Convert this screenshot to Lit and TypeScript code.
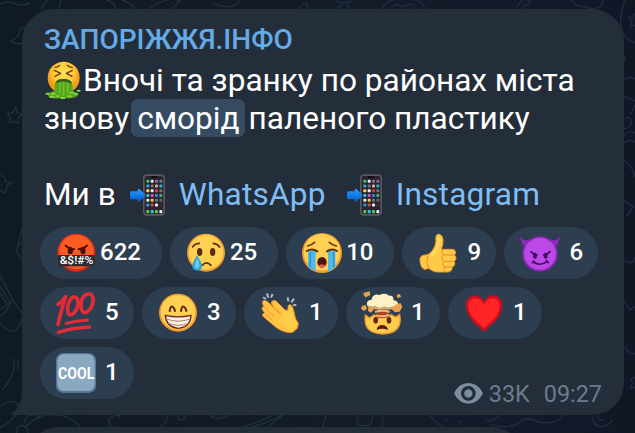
import { LitElement, html, svg, css, SVGTemplateResult } from "lit";
import { customElement, property } from "lit/decorators.js";

const EMOJI: Record<string, SVGTemplateResult> = {
  swearing: svg`
    <circle cx="61" cy="59" r="57" fill="#d92c14"/><circle cx="61" cy="57" r="52" fill="#fb5b22"/>
    <ellipse cx="43" cy="53" rx="8" ry="11" fill="#4a0f0c"/><ellipse cx="81" cy="53" rx="8" ry="11" fill="#4a0f0c"/>
    <path d="M29 38Q40 48 54 49M93 38Q82 48 68 49" stroke="#4a0f0c" stroke-width="6" fill="none" stroke-linecap="round"/>
    <rect x="6" y="66" width="110" height="34" rx="4" fill="#2b2b30"/>
    <text x="11" y="94" font-size="31" textLength="101" lengthAdjust="spacingAndGlyphs" font-weight="500" fill="#fff">&amp;$!#%</text>`,
  cry: svg`
    <circle cx="60" cy="59" r="57" fill="#f29a2e"/><circle cx="60" cy="58" r="52" fill="#ffd052"/>
    <ellipse cx="41" cy="57" rx="8" ry="12" fill="#5b2b12"/><ellipse cx="80" cy="57" rx="8" ry="12" fill="#5b2b12"/>
    <path d="M20 42Q25 32 40 31M101 42Q95 32 82 31M49 97Q61 82 75 97" stroke="#5b2b12" stroke-width="5" fill="none" stroke-linecap="round"/>
    <path d="M33 66C25 82 19 90 19 99C19 117 48 117 48 99C48 90 41 82 33 66Z" fill="#2ba4dd"/>
    <path d="M34 76Q25 93 27 101Q32 112 40 101Q42 91 34 76Z" fill="#72caef"/>`,
  sob: svg`
    <circle cx="60" cy="60" r="60" fill="#f29a2e"/><circle cx="60" cy="58" r="55" fill="#ffd052"/>
    <path d="M20 54H41V116Q28 111 18 100V54ZM78 54H100V101Q91 111 78 116Z" fill="#50b9e8"/>
    <path d="M25 57V105M95 57V104" stroke="#2695cf" stroke-width="4"/>
    <path d="M14 54Q31 44 46 55M75 55Q90 44 105 54" stroke="#5b2b12" stroke-width="6" fill="none" stroke-linecap="round"/>
    <path d="M17 39Q28 36 38 28M82 28Q91 36 103 39" stroke="#6b3414" stroke-width="5" fill="none" stroke-linecap="round"/>
    <ellipse cx="60" cy="88" rx="14" ry="16" fill="#4b160f"/><ellipse cx="60" cy="99" rx="9" ry="5" fill="#dc6254"/>`,
  thumb: svg`
    <path d="M57 5C65 0 74 8 75 20C76 31 72 42 70 49H102C113 49 116 60 109 66C116 72 115 82 108 85C113 92 109 100 102 102C104 112 96 117 88 117H58C45 117 38 109 30 105C25 112 14 110 10 99C5 87 4 74 11 69C19 64 28 68 34 62C44 54 51 41 53 30C55 20 51 10 57 5Z" fill="#ffca45" stroke="#f1982c" stroke-width="3"/>
    <path d="M107 66H77Q66 58 77 50M106 85H78Q66 76 77 66M101 102H80Q68 94 78 85M80 102Q73 110 81 116M29 70Q22 88 31 104" fill="none" stroke="#e98b26" stroke-width="3" stroke-linecap="round"/>
    <path d="M61 13Q67 20 60 38Q53 56 42 67" fill="none" stroke="#ffdc63" stroke-width="7" stroke-linecap="round"/>`,
  devil: svg`
    <path d="M1 5Q4 24 22 22L35 18L16 43Q2 33 1 5ZM119 5Q116 24 98 22L85 18L104 43Q118 33 119 5Z" fill="#8e2cc1"/>
    <circle cx="60" cy="63" r="53" fill="#8927b4"/><circle cx="60" cy="62" r="48" fill="#bd48e8"/>
    <ellipse cx="45" cy="68" rx="6" ry="9" fill="#410d62"/><ellipse cx="77" cy="68" rx="6" ry="9" fill="#410d62"/>
    <path d="M33 56Q40 65 51 66M90 56Q82 65 71 66M40 87Q60 101 81 86M37 89L42 84M79 83L85 89" stroke="#410d62" stroke-width="5" fill="none" stroke-linecap="round"/>`,
  hundred: svg`
    <g fill="none" stroke="#e52b35" stroke-linecap="round" stroke-linejoin="round">
    <path d="M6 34Q20 26 29 11Q13 61 6 94" stroke-width="11"/>
    <path d="M60 13C43 5 31 39 36 58C41 77 64 57 66 31Q67 17 60 13Z" stroke-width="11"/>
    <path d="M97 3C79 4 70 32 77 50C84 71 108 50 111 26Q113 1 97 3Z" stroke-width="11"/>
    <path d="M30 91Q61 83 94 81" stroke-width="9"/><path d="M7 118Q45 105 101 102" stroke-width="10"/></g>`,
  grin: svg`
    <circle cx="60" cy="59" r="57" fill="#f29a2e"/><circle cx="60" cy="58" r="52" fill="#ffd052"/>
    <path d="M35 54Q37 39 43 41Q49 43 51 54M69 54Q71 39 77 41Q83 43 85 54" fill="none" stroke="#592b12" stroke-width="6" stroke-linecap="round"/>
    <path d="M22 67Q60 76 99 67Q97 104 60 106Q25 102 22 67Z" fill="#fff0e7" stroke="#692b19" stroke-width="4"/>
    <path d="M25 78Q60 91 96 78M31 91Q60 103 91 91" fill="none" stroke="#aa8270" stroke-width="3"/>`,
  clap: svg`
    <path d="M8 26C12 19 21 24 28 31L42 43L34 30C35 21 45 20 51 27L71 47C79 54 85 54 84 44C83 34 92 32 96 40C104 54 103 70 108 80L115 91L112 106L98 118C80 121 60 112 47 102L10 71Q4 62 14 59L7 50Q3 42 13 41L8 33Z" fill="#ffc444" stroke="#ee942c" stroke-width="3"/>
    <path d="M12 40L43 71M12 58L39 83M24 28L58 63M43 43L67 68" fill="none" stroke="#ed992e" stroke-width="3"/>
    <path d="M70 52C80 61 88 56 90 44Q98 46 99 66L110 92L94 113Q74 103 60 84Z" fill="#ffce49"/>
    <path d="M9 13L18 18M21 1L25 14M38 3L33 14M83 13L85 25M102 17L94 28M109 36L99 37" stroke="#aeb8bf" stroke-width="6"/>`,
  exploding: svg`
    <path d="M10 66L23 75L37 65L48 76L61 67L75 76L88 65L101 73L113 64Q124 121 61 123Q2 121 10 66Z" fill="#ffcc4d" stroke="#ef9b31" stroke-width="4"/>
    <path d="M44 43L78 44L77 60Q88 72 60 76Q32 73 47 59Z" fill="#a94720"/>
    <path d="M39 57Q60 49 83 57M42 67Q63 74 82 65" stroke="#f0b580" stroke-width="6" fill="none"/>
    <path d="M16 38C11 28 20 19 29 20C30 5 45 2 52 6C65-1 77 2 80 8C94 6 95 17 94 22C108 22 112 34 104 41Q62 55 16 38Z" fill="#fff0c6"/>
    <path d="M15 36Q29 43 40 38Q53 49 66 40Q87 48 105 34L101 46Q83 53 67 49Q43 52 20 46Z" fill="#c8aa78"/>
    <path d="M6-1L23-5L25 6L11 13L4 5ZM104 5L114 3L117 12L106 15ZM0 39L11 36L15 47L6 54L-3 47ZM19 45L31 42L35 51L26 59L18 54ZM101 36L115 30L121 41L113 56L99 58L88 48Z" fill="#f0a04b"/>
    <ellipse cx="41" cy="82" rx="7" ry="10" fill="#5b2b12"/><ellipse cx="81" cy="82" rx="7" ry="10" fill="#5b2b12"/>
    <path d="M44 111Q46 96 61 96Q76 97 78 111Q60 103 44 111Z" fill="#5b1812"/>`,
  heart: svg`
    <path d="M60 117C44 99 6 76 5 38C4 2 47-4 60 25C73-4 116 2 115 38C114 76 76 99 60 117Z" fill="#c70f20"/>
    <path d="M60 105C46 91 13 70 13 38C13 10 48 7 60 36C72 7 107 10 107 38C107 70 74 91 60 105Z" fill="#ff2526"/>`,
  cool: svg`
    <rect x="0" y="0" width="120" height="120" rx="22" fill="#54779a"/><rect x="4" y="4" width="112" height="110" rx="19" fill="#8ba8c1"/>
    <text x="6" y="78" font-size="50" font-weight="700" textLength="109" lengthAdjust="spacingAndGlyphs" fill="#fff">COOL</text>`,
};

const APP_ROWS = [
  ["#3bd05a", "#e9e9ee", "#9c63b5", "#777b80"],
  ["#29aad8", "#77717c", "#e5b18d", "#28b0d2"],
  ["#f3dc4f", "#eeeeee", "#d93c49", "#737177"],
  ["#2cc4e4", "#ec45bd", "#2787e2", "#35ba62"],
  ["#ece9e5", "#edce48", "#77717c", "#68656e"],
  ["#289ee1", "#d54a43", "#f1f1f1", "#332e38"],
];
const DOCK = ["#42d257", "#35c9df", "#42d257", "#e9e9ee"];

const phone = () => html`<svg class="phone" viewBox="297 36 111 132">
  <defs><linearGradient id="arrow" x2="0" y2="1"><stop stop-color="#24a0ff"/><stop offset="1" stop-color="#0759c7"/></linearGradient></defs>
  <rect x="339" y="40" width="66" height="124" rx="12" fill="#5c555f"/>
  <rect x="344" y="45" width="56" height="114" rx="7" fill="#2b2530"/>
  <rect x="363" y="45" width="18" height="6" rx="3" fill="#09080c"/>
  ${APP_ROWS.map((row, r) => row.map((c, i) => svg`<rect x=${349 + i * 13} y=${56 + r * 14.3} width="9" height="9" rx="3" fill=${c}/>`))}
  ${DOCK.map((c, i) => svg`<rect x=${349 + i * 13} y="147" width="9" height="10" rx="3" fill=${c}/>`)}
  <path d="M300 95Q300 91 305 91H323V86Q324 81 329 85L345 100Q347 103 345 106L329 121Q324 124 323 119V115H305Q300 115 300 111Z" fill="url(#arrow)"/>
</svg>`;

const sick = html`<svg class="sick" viewBox="135 180 108 120">
  <defs><radialGradient id="face" cy=".35"><stop stop-color="#ffe45a"/><stop offset=".65" stop-color="#ffc936"/><stop offset="1" stop-color="#f59b18"/></radialGradient></defs>
  <circle cx="191" cy="233" r="48" fill="url(#face)"/>
  <path d="M163 211L182 220L165 229M217 211L199 220L216 229M165 202Q174 202 179 196M202 196Q208 202 217 203" fill="none" stroke="#693b17" stroke-width="4" stroke-linecap="round" stroke-linejoin="round"/>
  <path d="M165 252Q168 237 190 237Q213 237 217 252L219 274Q236 278 233 287Q218 298 190 294Q155 299 144 287Q145 277 164 273Z" fill="#55a51f"/>
  <path d="M166 250Q171 235 191 237Q212 237 216 251Q190 239 166 250Z" fill="#365b10"/>
  <path d="M180 248V280M191 246V288M203 249V280" stroke="#72c32c" stroke-width="4"/>
  <path d="M139 281H147M151 291H160M169 289H176M184 294H193M205 289H213M224 282H232M233 272H239M155 281H164M211 278H219" stroke="#7ed33a" stroke-width="6" stroke-linecap="round"/>
</svg>`;

@customElement("reaction-pill")
class ReactionPill extends LitElement {
  @property() emoji = "";
  @property() count = "";
  static styles = css`
    :host { display: block; }
    .pill { display: flex; align-items: center; box-sizing: border-box; height: 52px; padding: 0 21px 0 16px; border-radius: 26px; background: #2d3e51; }
    .icon { width: 40px; height: 40px; margin-right: 4px; overflow: visible; flex: none; font-family: Roboto, sans-serif; }
    .count { font: 500 24px/48px Roboto, sans-serif; color: #fff; height: 50px; }
    .single { width: 94px; padding-right: 0; }
    .single .icon { margin-right: 9px; }
  `;
  render() {
    return html`<div class="pill ${this.count.length === 1 ? "single" : ""}">
      <svg class="icon" viewBox="0 0 120 120">${EMOJI[this.emoji]}</svg><span class="count">${this.count}</span>
    </div>`;
  }
}

const ROWS = [
  [["swearing", "622"], ["cry", "25"], ["sob", "10"], ["thumb", "9"], ["devil", "6"]],
  [["hundred", "5"], ["grin", "3"], ["clap", "1"], ["exploding", "1"], ["heart", "1"]],
  [["cool", "1"]],
];

@customElement("app-root")
class AppRoot extends LitElement {
  static styles = css`
    :host { display: block; position: relative; height: 433px; overflow: hidden; font-family: Roboto, sans-serif;
      background: linear-gradient(90deg, #101a23, #131b29 60%, #121726); }
    .wallpaper { position: absolute; inset: 0; width: 635px; height: 433px; }
    .feed { position: relative; display: flex; flex-direction: column; gap: 12px; padding-top: 9px; }
    .bubble { position: relative; box-sizing: border-box; width: 602px; height: 406px; margin-left: 22px; padding: 12px 22px 15px;
      border-radius: 32px 32px 32px 0; background: #232e3a; }
    .tail { position: absolute; left: -11px; bottom: 0; width: 11px; height: 24px; }
    .next { width: 494px; height: 60px; margin-left: 28px; border-radius: 32px; background: #232e3a; }
    .title { height: 41px; font-size: 28px; line-height: 38px; font-weight: 500; color: #64aae6; white-space: nowrap; }
    .line { display: flex; align-items: center; height: 38px; font-size: 31.6px; line-height: 38px; color: #fff; white-space: nowrap; }
    .sick { width: 36px; height: 40px; margin: -2px 2px 0 1px; flex: none; }
    .phone { width: 37px; height: 44px; margin-top: -1px; flex: none; }
    .mark { height: 38px; margin: -2px 4px 0 2px; padding: 0 5px 0 6px; border-radius: 7px; background: #344b62; }
    .mark span { display: inline-block; margin-top: 1px; }
    .link { color: #7fbdf5; letter-spacing: 0.2px; }
    .gap-a { margin-left: 13px; }
    .gap-b { margin-left: 20px; }
    .reactions { display: flex; flex-direction: column; gap: 8px; margin: 13px 0 0 -4px; }
    .row { display: flex; gap: 8px; height: 52px; }
    .meta { display: flex; align-items: center; height: 28px; margin: 33px 0 0 auto; color: #6c7c8c; font-size: 23.4px; line-height: 28px; }
    .eye { width: 29px; height: 21px; margin: -2px 6px 0 0; }
    .time { margin-left: 14px; }
  `;
  render() {
    return html`
      <svg class="wallpaper" viewBox="0 0 1905 1299" fill="none" stroke="#20303c" stroke-width="4">
        <path d="M0 12Q20 2 44 10Q70 22 90 8M125 28Q130 5 145 0M180 25Q175 0 200 -8M320 0Q348 10 346 27M365 0Q398 10 405 27M450 24Q500 -12 540 2L515 26M640 10Q700 35 720 0M900 26Q905 5 922 12V27"/>
        <path d="M32 124Q56 114 59 96Q61 79 78 82M32 124Q45 134 75 130"/>
        <path d="M47 320L51 337L67 344L54 353L55 370L42 363L28 369L31 352L22 341L38 338Z"/>
        <path d="M0 520Q14 528 17 544L34 550L20 556Q22 571 12 580L0 568M68 680L49 754L66 778M53 741L68 727M0 827L38 899L66 942M0 858L30 907M0 878L22 913M38 899Q25 915 0 927M34 905Q20 938 0 948M66 957Q54 996 34 994Q15 990 0 968"/>
        <path d="M40 1075Q52 1120 7 1170M54 1080V1112M0 1220Q20 1201 45 1206Q66 1220 48 1244Q28 1272 0 1282M50 1299Q48 1280 66 1276Q82 1276 84 1299M78 1270Q68 1252 88 1246Q112 1236 118 1256M75 1282Q115 1240 160 1244Q215 1246 242 1284"/>
        <path d="M360 1246Q326 1246 326 1264Q328 1284 344 1280M358 1246V1256M505 1244Q500 1270 480 1283M628 1246Q654 1264 682 1246M728 1281Q790 1262 824 1242M756 1281Q800 1270 850 1244M802 1281L850 1244M978 1246L968 1281M1075 1246Q1060 1278 1100 1277Q1120 1270 1116 1246M1144 1246Q1154 1264 1144 1281M1288 1246Q1310 1270 1330 1281M1336 1252L1342 1262M1374 1260L1386 1270M1458 1262Q1480 1266 1496 1247M1470 1274Q1540 1292 1570 1258Q1590 1252 1615 1266Q1664 1278 1692 1244M1777 1250Q1780 1282 1810 1279Q1830 1275 1836 1260M1790 1246Q1796 1265 1814 1258"/>
        <circle cx="543" cy="1250" r="10"/>
        <path d="M1005 2L1030 10L1060 2M1010 26L1025 12M1050 26L1040 10M1148 27Q1155 0 1200 -4Q1265 -8 1275 27M1175 25Q1180 10 1195 15Q1210 25 1225 13Q1245 12 1242 27M1550 22L1564 2Q1570 -10 1588 2Q1592 18 1575 16L1565 27M1715 0Q1730 24 1760 20Q1780 34 1805 15L1810 0" stroke="#202e40"/>
        <path d="M1875 0Q1855 50 1865 90Q1875 122 1905 127M1905 40L1898 50L1884 52L1895 63L1892 82L1905 75M1870 165Q1880 175 1870 187M1870 240Q1888 228 1905 236M1870 290L1905 302M1890 345L1905 315M1870 360Q1885 345 1893 360Q1898 382 1872 387M1870 410Q1890 385 1905 400M1870 430Q1885 415 1905 426M1868 480Q1900 500 1905 530M1868 600L1900 620L1880 650M1870 780Q1900 800 1905 770M1870 900L1890 930L1905 920M1875 1040Q1890 1070 1905 1060M1905 1132L1893 1138L1898 1150L1892 1164L1905 1162" stroke="#202e40"/>
      </svg>
      <div class="feed">
        <div class="bubble">
          <svg class="tail" viewBox="0 0 11 24"><path d="M11 0Q10 18 1 22Q-1 24 2 24H11Z" fill="#232e3a"/></svg>
          <div class="title">ЗАПОРІЖЖЯ.ІНФО</div>
          <div class="line">${sick}<span>Вночі та зранку по районах міста</span></div>
          <div class="line"><span>знову</span><span class="mark"><span>сморід</span></span><span>паленого пластику</span></div>
          <div class="line"></div>
          <div class="line"><span>Ми в</span><span class="gap-a"></span>${phone()}<span class="link gap-a">WhatsApp</span><span class="gap-b"></span>${phone()}<span class="link gap-a">Instagram</span></div>
          <div class="reactions">
            ${ROWS.map((row, i) => html`<div class="row">
              ${row.map(([e, c]) => html`<reaction-pill .emoji=${e} .count=${c}></reaction-pill>`)}
              ${i === ROWS.length - 1 ? html`<div class="meta">
                <svg class="eye" viewBox="0 0 87 63"><path fill-rule="evenodd" fill="#7b8d9f" d="M0 31Q15 0 43 0Q72 0 87 31Q72 62 43 62Q15 62 0 31ZM43 9A22 22 0 1 0 43.1 9ZM43 19A12.500 12.500 0 1 1 42.900 19Z"/></svg>
                <span>33K</span><span class="time">09:27</span></div>` : ""}
            </div>`)}
          </div>
        </div>
        <div class="next"></div>
      </div>`;
  }
}
